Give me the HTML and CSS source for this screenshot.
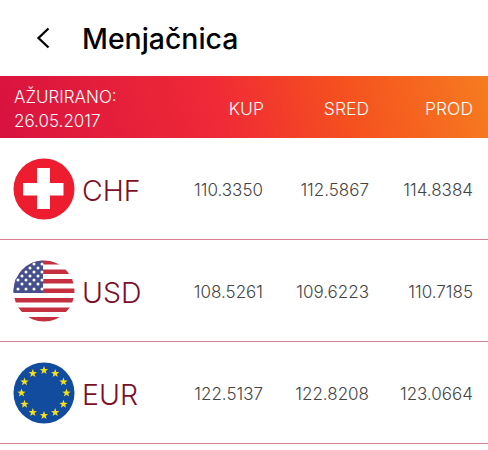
FILE: index.html
```html
<!DOCTYPE html>
<html lang="sr">
<head>
<meta charset="utf-8">
<title>Menjačnica</title>
<link rel="stylesheet" href="styles.css">
</head>
<body>
<header class="topbar">
  <svg class="back" viewBox="0 0 14 22" width="14" height="22"><path d="M12.5 1.5 2.5 11l10 9.5" fill="none" stroke="#000" stroke-width="2.3"/></svg>
  <h1 class="title">Menjačnica</h1>
</header>
<div class="band">
  <div class="updated">AŽURIRANO:<br>26.05.2017</div>
  <div class="col">KUP</div>
  <div class="col col-mid">SRED</div>
  <div class="col col-last">PROD</div>
</div>
<div class="row">
  <svg class="flag" viewBox="0 0 62 62"><circle cx="31" cy="31" r="30.5" fill="#ed1c2e"/><path d="M24 10h13v15h13.500v12.500H37V51H24V37.500H10V25h14z" fill="#fff"/></svg>
  <div class="code">CHF</div>
  <div class="val">110.3350</div><div class="val val-mid">112.5867</div><div class="val val-last">114.8384</div>
</div>
<div class="row">
  <svg class="flag" viewBox="0 0 62 62">
    <defs><clipPath id="c"><circle cx="31" cy="31" r="30.500"/></clipPath></defs>
    <g clip-path="url(#c)">
      <rect width="62" height="62" fill="#fff"/>
      <g fill="#c4303f">
        <rect y="0" width="62" height="4.500"/><rect y="9.500" width="62" height="4.500"/><rect y="19" width="62" height="4.500"/><rect y="28.500" width="62" height="4.500"/><rect y="38" width="62" height="4.500"/><rect y="47.500" width="62" height="4.500"/><rect y="57" width="62" height="5"/>
      </g>
      <rect width="30" height="33" fill="#46508c"/>
      <g fill="#fff">
        <circle cx="29" cy="4" r="1.500"/><circle cx="21" cy="4" r="1.500"/><circle cx="25" cy="8" r="1.500"/><circle cx="17" cy="8" r="1.500"/><circle cx="29" cy="12" r="1.500"/><circle cx="21" cy="12" r="1.500"/><circle cx="13" cy="12" r="1.500"/><circle cx="25" cy="16" r="1.500"/><circle cx="17" cy="16" r="1.500"/><circle cx="9" cy="16" r="1.500"/><circle cx="29" cy="20" r="1.500"/><circle cx="21" cy="20" r="1.500"/><circle cx="13" cy="20" r="1.500"/><circle cx="5" cy="20" r="1.500"/><circle cx="25" cy="24" r="1.500"/><circle cx="17" cy="24" r="1.500"/><circle cx="9" cy="24" r="1.500"/><circle cx="29" cy="29" r="1.500"/><circle cx="21" cy="29" r="1.500"/><circle cx="13" cy="29" r="1.500"/><circle cx="5" cy="29" r="1.500"/>
      </g>
    </g>
  </svg>
  <div class="code">USD</div>
  <div class="val">108.5261</div><div class="val val-mid">109.6223</div><div class="val val-last">110.7185</div>
</div>
<div class="row">
  <svg class="flag" viewBox="0 0 62 62">
    <defs><path id="s" d="M0-4.400 1.100-1.400 4.200-1.300 1.700.6 2.600 3.500 0 1.800-2.600 3.500-1.700.6-4.200-1.300-1.100-1.400z" fill="#f6e01e"/></defs>
    <circle cx="31" cy="31" r="30.500" fill="#114c9e"/>
    <use href="#s" x="31" y="8.500"/><use href="#s" x="42.200" y="11.500"/><use href="#s" x="50.500" y="19.800"/><use href="#s" x="53.500" y="31"/><use href="#s" x="50.500" y="42.200"/><use href="#s" x="42.200" y="50.500"/><use href="#s" x="31" y="53.500"/><use href="#s" x="19.800" y="50.500"/><use href="#s" x="11.500" y="42.200"/><use href="#s" x="8.500" y="31"/><use href="#s" x="11.500" y="19.800"/><use href="#s" x="19.800" y="11.500"/>
  </svg>
  <div class="code">EUR</div>
  <div class="val">122.5137</div><div class="val val-mid">122.8208</div><div class="val val-last">123.0664</div>
</div>
</body>
</html>
```
FILE: styles.css
```css
* { box-sizing: border-box; }
html, body { margin: 0; padding: 0; background: #fff; }
body { font-family: Inter, "Open Sans", sans-serif; height: 450px; overflow: hidden; }
.topbar { height: 76px; display: flex; align-items: center; padding-left: 36px; }
.back { display: block; margin-right: 32px; }
.title { margin: 0; font-size: 28.4px; font-weight: 500; color: #000; }
.band { height: 62px; display: flex; align-items: center; padding-right: 15px; color: #fff; font-size: 17.5px; font-weight: 300; background: linear-gradient(75deg, #d8123f 0%, #f02a36 45%, #f5501f 70%, #f67c20 100%); }
.updated { flex: 1; padding: 4px 0 0 14px; line-height: 24px; white-space: nowrap; font-size: 17px; }
.col { margin-top: 2px; }
.col-mid { width: 105px; text-align: right; }
.col-last { width: 104px; text-align: right; }
.row { height: 102px; display: flex; align-items: center; padding: 0 15px 0 13px; border-bottom: 1px solid #dd8095; }
.flag { width: 62px; height: 62px; display: block; flex: none; filter: blur(0.4px); }
.code { flex: 1; margin: 4px 0 0 7px; font-size: 28.500px; font-weight: 300; color: #7a1028; }
.val { margin-top: 2px; font-size: 17px; font-weight: 300; color: #444; }
.val-mid { width: 106px; text-align: right; }
.val-last { width: 104px; text-align: right; }
```
